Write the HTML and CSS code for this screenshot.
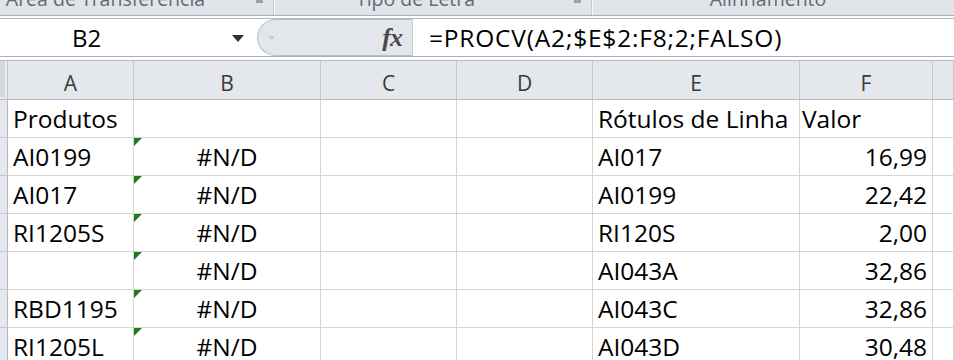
FILE: index.html
```html
<!DOCTYPE html>
<html>
<head>
<meta charset="utf-8">
<title>Planilha - PROCV</title>
<link rel="stylesheet" href="styles.css">
</head>
<body>

<div class="ribbon">
  <div class="group g1"><span class="label">Área de Transferência</span><span class="launcher"></span></div>
  <div class="group g2"><span class="label">Tipo de Letra</span><span class="launcher"></span></div>
  <div class="group g3"><span class="label">Alinhamento</span></div>
</div>

<div class="formula-bar">
  <div class="name-box">
    <span class="name">B2</span>
    <span class="dropdown"></span>
  </div>
  <div class="fx-area">
    <span class="grip"></span>
    <span class="fx">fx</span>
  </div>
  <div class="formula">=PROCV(A2;$E$2:F8;2;FALSO)</div>
</div>

<div class="sheet">
  <div class="hd corner"></div>
  <div class="hd">A</div>
  <div class="hd">B</div>
  <div class="hd">C</div>
  <div class="hd">D</div>
  <div class="hd">E</div>
  <div class="hd">F</div>
  <div class="hd last"></div>

  <div class="rh"></div>
  <div class="c">Produtos</div>
  <div class="c"></div>
  <div class="c"></div>
  <div class="c"></div>
  <div class="c">Rótulos de Linha</div>
  <div class="c tight">Valor</div>
  <div class="c"></div>

  <div class="rh"></div>
  <div class="c">AI0199</div>
  <div class="c err">#N/D</div>
  <div class="c"></div>
  <div class="c"></div>
  <div class="c">AI017</div>
  <div class="c num">16,99</div>
  <div class="c"></div>

  <div class="rh"></div>
  <div class="c">AI017</div>
  <div class="c err">#N/D</div>
  <div class="c"></div>
  <div class="c"></div>
  <div class="c">AI0199</div>
  <div class="c num">22,42</div>
  <div class="c"></div>

  <div class="rh"></div>
  <div class="c">RI1205S</div>
  <div class="c err">#N/D</div>
  <div class="c"></div>
  <div class="c"></div>
  <div class="c">RI120S</div>
  <div class="c num">2,00</div>
  <div class="c"></div>

  <div class="rh"></div>
  <div class="c"></div>
  <div class="c err">#N/D</div>
  <div class="c"></div>
  <div class="c"></div>
  <div class="c">AI043A</div>
  <div class="c num">32,86</div>
  <div class="c"></div>

  <div class="rh"></div>
  <div class="c">RBD1195</div>
  <div class="c err">#N/D</div>
  <div class="c"></div>
  <div class="c"></div>
  <div class="c">AI043C</div>
  <div class="c num">32,86</div>
  <div class="c"></div>

  <div class="rh"></div>
  <div class="c">RI1205L</div>
  <div class="c err">#N/D</div>
  <div class="c"></div>
  <div class="c"></div>
  <div class="c">AI043D</div>
  <div class="c num">30,48</div>
  <div class="c"></div>
</div>

</body>
</html>
```

FILE: styles.css
```css
body {
   margin: 0;
   font-family: 'Open Sans', 'Noto Sans', sans-serif;
   background-color: white;
   overflow: hidden;
}

/* ribbon group labels, cut at the top */

.ribbon {
   display: flex;
   height: 15px;
   overflow: hidden;
   background-color: #e1e4e9;
   border-bottom: 1px solid #a9b0ba;
}

.group {
   position: relative;
   display: flex;
   justify-content: center;
   align-items: flex-start;
   border-right: 1px solid #c4c9d1;
   box-shadow: 1px 0 0 #f4f6f8;
}

.g1 { width: 274px; padding-right: 60px; box-sizing: border-box; }
.g2 { width: 318px; padding-right: 34px; box-sizing: border-box; }
.g3 { flex: 1; padding-right: 10px; border-right: none; box-shadow: none; }

.label {
   margin-top: -11px;
   font-size: 19.5px;
   line-height: 20px;
   color: #646a74;
   white-space: nowrap;
}

.g1 .label { margin-left: -2px; }

.launcher {
   position: absolute;
   top: 0;
   right: 10px;
   width: 7px;
   height: 3px;
   background-color: #9aa1ab;
}

/* formula bar */

.formula-bar {
   display: flex;
   height: 37px;
   margin-top: 2px;
   border-top: 1px solid #b3b9c2;
   border-bottom: 1px solid #a9b0ba;
   background-color: white;
}

.name-box {
   position: relative;
   width: 257px;
   display: flex;
   align-items: center;
}

.name {
   padding-left: 72px;
   font-size: 24px;
   color: black;
}

.dropdown {
   position: absolute;
   left: 232px;
   top: 16px;
   width: 0;
   height: 0;
   border-left: 6px solid transparent;
   border-right: 6px solid transparent;
   border-top: 7px solid #333;
}

.fx-area {
   position: relative;
   width: 156px;
   height: 37px;
   box-sizing: border-box;
   background-color: #e3e6eb;
   border: 1px solid #b9bfc8;
   border-right: 1px solid #c9ced5;
   border-radius: 19px 0 0 19px;
   display: flex;
   justify-content: flex-end;
   align-items: center;
}

.grip {
   position: absolute;
   left: 11px;
   top: 16px;
   width: 5px;
   height: 3px;
   border-radius: 2px;
   background-color: #c6cbd2;
}

.fx {
   padding-right: 10px;
   font-family: 'Liberation Serif', serif;
   font-style: italic;
   font-weight: bold;
   font-size: 26px;
   color: #4a4a4a;
   letter-spacing: -1px;
}

.formula {
   padding-left: 16px;
   font-size: 24.5px;
   line-height: 37px;
   letter-spacing: 0.8px;
   color: black;
   white-space: nowrap;
}

/* worksheet grid */

.sheet {
   display: grid;
   grid-template-columns: 8px 126px 187px 136px 136px 207px 133px 1fr;
   grid-template-rows: 39px;
   grid-auto-rows: 38px;
   margin-top: 3px;
   border-top: 1px solid #b3b9c2;
}

.sheet > div {
   box-sizing: border-box;
   border-right: 1px solid #d4d4d4;
   border-bottom: 1px solid #d4d4d4;
   white-space: nowrap;
   overflow: hidden;
}

.hd {
   padding-top: 6px;
   font-size: 21px;
   line-height: 32px;
   text-align: center;
   color: #3b3b3b;
   background-color: #e4e7ec;
   border-right-color: #c3c8d0 !important;
   border-bottom-color: #b3b9c2 !important;
}

.corner {
   background-color: #d3d7dd;
   box-shadow: inset -2px -2px 0 #e7eaee;
}

.rh {
   background-color: #e4e7ec;
   border-right-color: #b3b9c2 !important;
   border-bottom-color: #c3c8d0 !important;
}

.c {
   position: relative;
   padding: 0 5px;
   font-size: 24.5px;
   line-height: 38px;
   color: black;
}

.tight {
   padding-left: 2px;
}

.num {
   text-align: right;
}

.err {
   text-align: center;
}

.err::before {
   content: "";
   position: absolute;
   left: 0;
   top: 0;
   border-top: 8px solid #1d7d1d;
   border-right: 8px solid transparent;
}
```
